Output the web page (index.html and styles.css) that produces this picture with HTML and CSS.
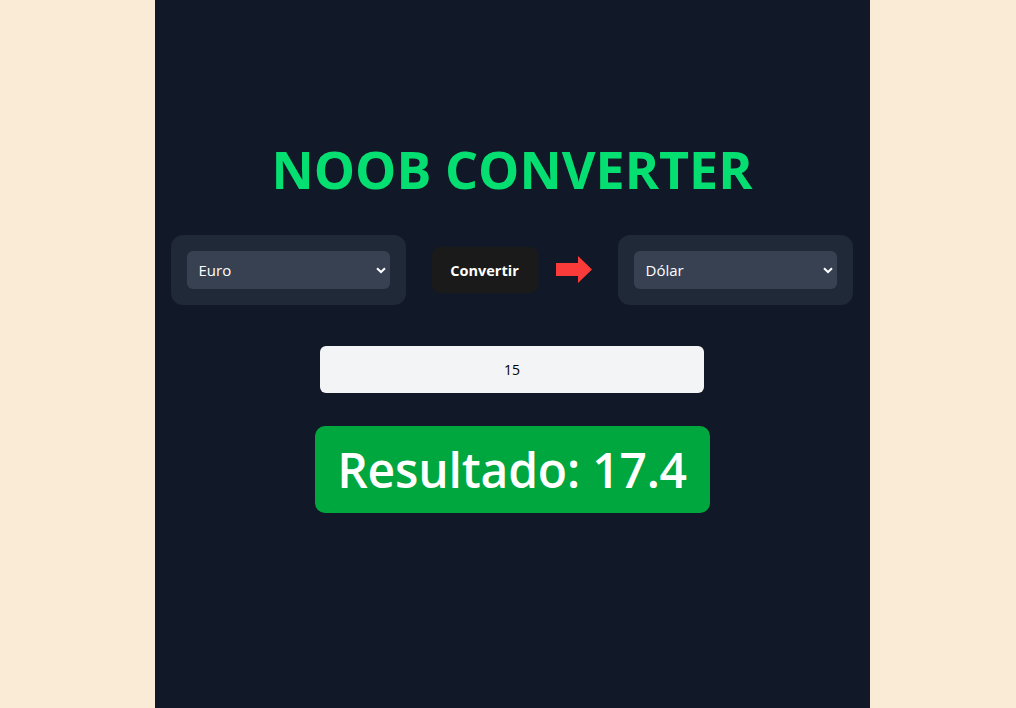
FILE: index.html
```html
<!DOCTYPE html>
<html lang="es">
<head>
<meta charset="utf-8">
<title>Noob Converter</title>
<link rel="stylesheet" href="styles.css">
</head>
<body>
<main class="app">
  <h1 class="title">NOOB CONVERTER</h1>
  <div class="controls">
    <div class="select-box">
      <select class="currency">
        <option>Euro</option>
        <option>Dólar</option>
      </select>
    </div>
    <button class="convert-btn" type="button">Convertir</button>
    <svg class="arrow" width="36" height="28" viewBox="0 0 36 28" aria-hidden="true">
      <path d="M0 7 H22 V0 L36 13.5 L22 27 V20 H0 Z" fill="#fb3a3a"/>
    </svg>
    <div class="select-box">
      <select class="currency">
        <option>Dólar</option>
        <option>Euro</option>
      </select>
    </div>
  </div>
  <input class="amount" type="text" value="15">
  <div class="result">Resultado: 17.4</div>
</main>
</body>
</html>
```
FILE: styles.css
```css
* { box-sizing: border-box; }

html, body {
  margin: 0;
  height: 100%;
}

body {
  background: #faebd7;
  display: flex;
  justify-content: center;
  padding-left: 8px;
  font-family: "Open Sans", "Noto Sans", sans-serif;
}

.app {
  width: 715px;
  min-height: 100%;
  background: #111827;
  padding: 145px 16px 16px;
  display: flex;
  flex-direction: column;
  align-items: center;
}

.title {
  margin: 0 0 42px;
  font-size: 52px;
  line-height: 48px;
  font-weight: 700;
  color: #05df72;
}

.controls {
  display: flex;
  align-items: center;
  width: 100%;
}

.select-box {
  width: 235px;
  height: 70px;
  background: #1f2937;
  border-radius: 12px;
  padding: 16px;
}

.currency {
  appearance: none;
  -webkit-appearance: none;
  width: 100%;
  height: 38px;
  border: none;
  border-radius: 6px;
  background-color: #374151;
  background-image: url("data:image/svg+xml,%3Csvg xmlns='http://www.w3.org/2000/svg' width='10' height='7' viewBox='0 0 10 7'%3E%3Cpath d='M1 1.2 L5 5 L9 1.2' fill='none' stroke='white' stroke-width='2'/%3E%3C/svg%3E");
  background-repeat: no-repeat;
  background-position: right 4px center;
  color: #fff;
  font-family: inherit;
  font-size: 15px;
  padding: 0 12px;
  outline: none;
}

.convert-btn {
  margin-left: 26px;
  width: 106px;
  height: 46px;
  border: none;
  border-radius: 8px;
  background: #1a1a1a;
  color: #fff;
  font-family: inherit;
  font-size: 14.5px;
  font-weight: 700;
}

.arrow {
  display: block;
  margin: 0 26px 0 18px;
}

.amount {
  margin-top: 41px;
  width: 384px;
  height: 47px;
  border: none;
  border-radius: 6px;
  background: #f3f4f6;
  color: #000;
  text-align: center;
  font-family: inherit;
  font-size: 14px;
  outline: none;
}

.result {
  margin-top: 33px;
  width: 395px;
  height: 87px;
  border-radius: 10px;
  background: #00a63e;
  color: #fff;
  font-size: 48px;
  font-weight: 600;
  letter-spacing: -0.2px;
  display: flex;
  align-items: center;
  justify-content: center;
}
```
